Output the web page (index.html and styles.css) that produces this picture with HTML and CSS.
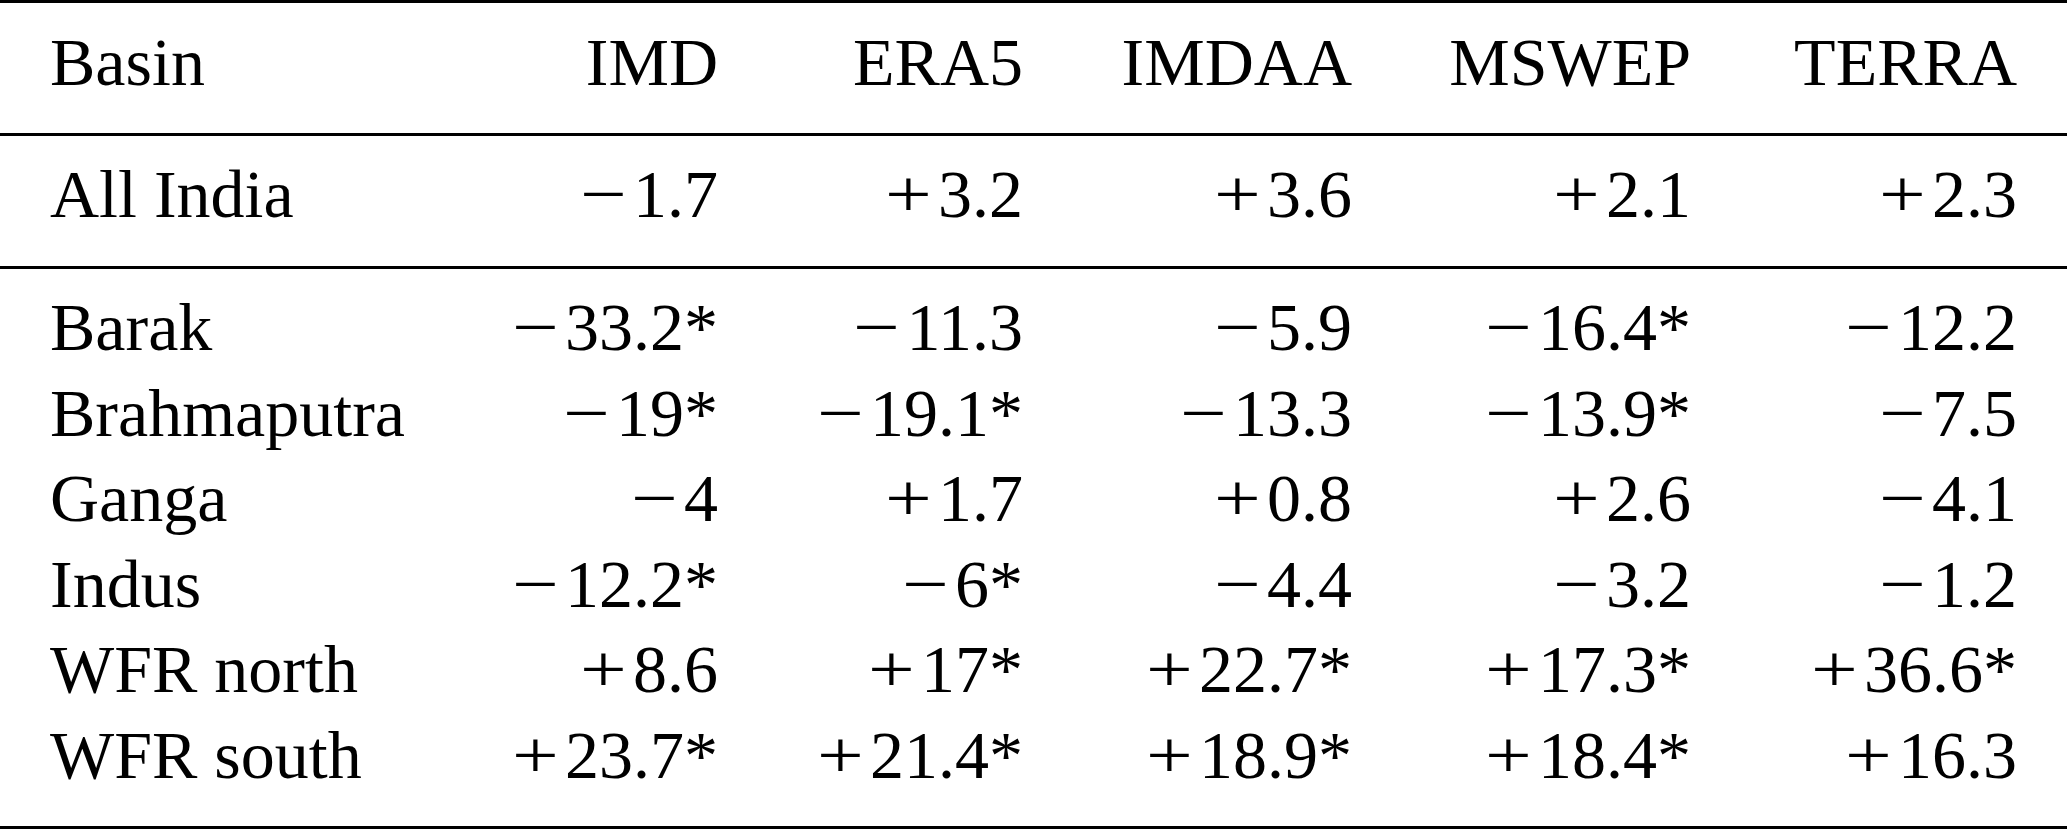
FILE: index.html
```html
<!DOCTYPE html>
<html lang="en">
<head>
<meta charset="utf-8">
<title>Basin table</title>
<link rel="stylesheet" href="styles.css">
</head>
<body>
<div class="table">
  <div class="section head">
    <div class="row">
      <div class="cell label">Basin</div>
      <div class="cell num">IMD</div>
      <div class="cell num">ERA5</div>
      <div class="cell num">IMDAA</div>
      <div class="cell num">MSWEP</div>
      <div class="cell num">TERRA</div>
    </div>
  </div>
  <div class="section summary">
    <div class="row">
      <div class="cell label">All India</div>
      <div class="cell num"><span class="sign">−</span>1.7</div>
      <div class="cell num"><span class="sign">+</span>3.2</div>
      <div class="cell num"><span class="sign">+</span>3.6</div>
      <div class="cell num"><span class="sign">+</span>2.1</div>
      <div class="cell num"><span class="sign">+</span>2.3</div>
    </div>
  </div>
  <div class="section body">
    <div class="row">
      <div class="cell label">Barak</div>
      <div class="cell num"><span class="sign">−</span>33.2*</div>
      <div class="cell num"><span class="sign">−</span>11.3</div>
      <div class="cell num"><span class="sign">−</span>5.9</div>
      <div class="cell num"><span class="sign">−</span>16.4*</div>
      <div class="cell num"><span class="sign">−</span>12.2</div>
    </div>
    <div class="row">
      <div class="cell label">Brahmaputra</div>
      <div class="cell num"><span class="sign">−</span>19*</div>
      <div class="cell num"><span class="sign">−</span>19.1*</div>
      <div class="cell num"><span class="sign">−</span>13.3</div>
      <div class="cell num"><span class="sign">−</span>13.9*</div>
      <div class="cell num"><span class="sign">−</span>7.5</div>
    </div>
    <div class="row">
      <div class="cell label">Ganga</div>
      <div class="cell num"><span class="sign">−</span>4</div>
      <div class="cell num"><span class="sign">+</span>1.7</div>
      <div class="cell num"><span class="sign">+</span>0.8</div>
      <div class="cell num"><span class="sign">+</span>2.6</div>
      <div class="cell num"><span class="sign">−</span>4.1</div>
    </div>
    <div class="row">
      <div class="cell label">Indus</div>
      <div class="cell num"><span class="sign">−</span>12.2*</div>
      <div class="cell num"><span class="sign">−</span>6*</div>
      <div class="cell num"><span class="sign">−</span>4.4</div>
      <div class="cell num"><span class="sign">−</span>3.2</div>
      <div class="cell num"><span class="sign">−</span>1.2</div>
    </div>
    <div class="row">
      <div class="cell label">WFR north</div>
      <div class="cell num"><span class="sign">+</span>8.6</div>
      <div class="cell num"><span class="sign">+</span>17*</div>
      <div class="cell num"><span class="sign">+</span>22.7*</div>
      <div class="cell num"><span class="sign">+</span>17.3*</div>
      <div class="cell num"><span class="sign">+</span>36.6*</div>
    </div>
    <div class="row">
      <div class="cell label">WFR south</div>
      <div class="cell num"><span class="sign">+</span>23.7*</div>
      <div class="cell num"><span class="sign">+</span>21.4*</div>
      <div class="cell num"><span class="sign">+</span>18.9*</div>
      <div class="cell num"><span class="sign">+</span>18.4*</div>
      <div class="cell num"><span class="sign">+</span>16.3</div>
    </div>
  </div>
</div>
</body>
</html>
```

FILE: styles.css
```css
html, body {
  margin: 0;
  padding: 0;
  background: #ffffff;
}

.table {
  width: 2067px;
  font-family: "Liberation Serif", "Times New Roman", serif;
  font-size: 68px;
  color: #000000;
  border-top: 3px solid #000000;
}

.section {
  border-bottom: 3px solid #000000;
  padding: 0 50px;
}

.head {
  padding-top: 17px;
  padding-bottom: 28px;
}

.summary {
  padding-top: 16px;
  padding-bottom: 29px;
}

.body {
  padding-top: 16px;
  padding-bottom: 28px;
}

.row {
  display: grid;
  grid-template-columns: 400px 268px 305px 329px 339px 326px;
  line-height: 85px;
}

.body .row {
  line-height: 85.5px;
}

.cell {
  white-space: nowrap;
}

.label {
  text-align: left;
}

.num {
  text-align: right;
}

.sign {
  display: inline-block;
  width: 0.78em;
  text-align: left;
  transform: scaleX(1.22);
  transform-origin: 0 50%;
}
```
